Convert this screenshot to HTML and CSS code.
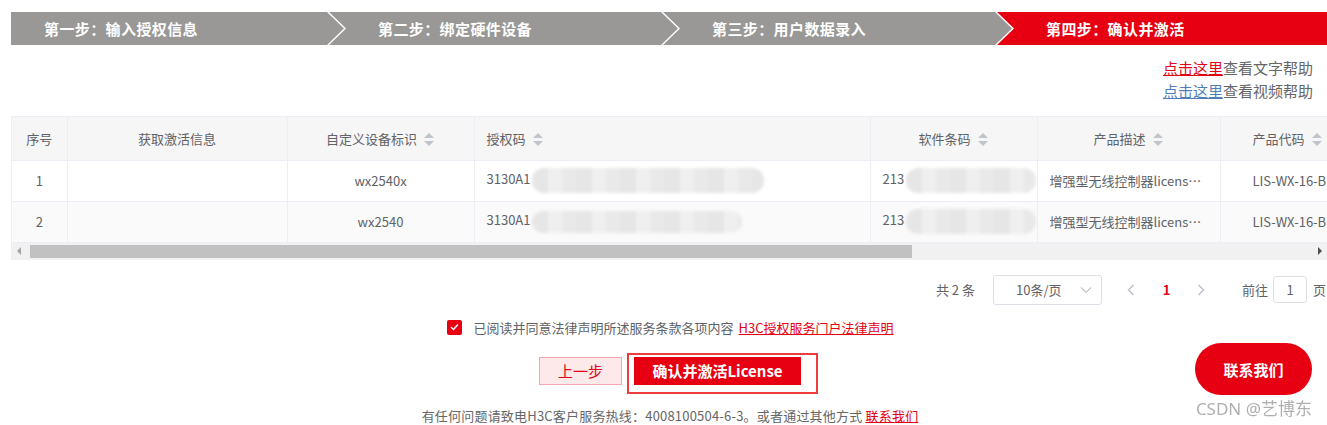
FILE: index.html
```html
<!DOCTYPE html>
<html lang="zh-CN">
    <head>
        <meta charset="UTF-8" />
        <meta name="viewport" content="width=device-width, initial-scale=1.0" />
        <title>确认并激活</title>
        <link rel="stylesheet" href="styles.css">
    </head>
    <body>
        <div class="page">
            <ol class="steps">
                <li class="step">第一步：输入授权信息</li>
                <li class="step">第二步：绑定硬件设备</li>
                <li class="step">第三步：用户数据录入</li>
                <li class="step active">第四步：确认并激活</li>
            </ol>

            <div class="help">
                <p><a href="#" class="link-red">点击这里</a>查看文字帮助</p>
                <p><a href="#" class="link-blue">点击这里</a>查看视频帮助</p>
            </div>

            <div class="table-wrap">
                <table class="grid">
                    <colgroup>
                        <col style="width: 55px">
                        <col style="width: 220px">
                        <col style="width: 187px">
                        <col style="width: 396px">
                        <col style="width: 167px">
                        <col style="width: 183px">
                        <col style="width: 160px">
                    </colgroup>
                    <thead>
                        <tr>
                            <th class="center">序号</th>
                            <th class="center">获取激活信息</th>
                            <th class="center">自定义设备标识<span class="sort"></span></th>
                            <th>授权码<span class="sort"></span></th>
                            <th class="center">软件条码<span class="sort"></span></th>
                            <th class="center">产品描述<span class="sort"></span></th>
                            <th class="code-head">产品代码<span class="sort"></span></th>
                        </tr>
                    </thead>
                    <tbody>
                        <tr>
                            <td class="center">1</td>
                            <td></td>
                            <td class="center">wx2540x</td>
                            <td class="clip">3130A1<span class="mask mask-long"></span></td>
                            <td class="clip">213<span class="mask mask-short"></span></td>
                            <td class="center">增强型无线控制器license授权函</td>
                            <td class="code">LIS-WX-16-BE</td>
                        </tr>
                        <tr class="stripe">
                            <td class="center">2</td>
                            <td></td>
                            <td class="center">wx2540</td>
                            <td class="clip">3130A1<span class="mask mask-mid"></span></td>
                            <td class="clip">213<span class="mask mask-short"></span></td>
                            <td class="center">增强型无线控制器license授权函</td>
                            <td class="code">LIS-WX-16-BE</td>
                        </tr>
                    </tbody>
                </table>
                <div class="hscroll">
                    <span class="arrow-left"></span>
                    <span class="thumb"></span>
                    <span class="arrow-right"></span>
                </div>
            </div>

            <div class="pager">
                <span class="total">共 2 条</span>
                <div class="size-select">
                    <span>10条/页</span>
                    <svg width="12" height="8" viewBox="0 0 12 8"><path d="M1 1.5 6 6.5 11 1.5" fill="none" stroke="#c0c4cc" stroke-width="1.2"/></svg>
                </div>
                <button class="page-btn">
                    <svg width="8" height="12" viewBox="0 0 8 12"><path d="M6.5 1 1.5 6 6.5 11" fill="none" stroke="#c0c4cc" stroke-width="1.6"/></svg>
                </button>
                <button class="page-btn current">1</button>
                <button class="page-btn">
                    <svg width="8" height="12" viewBox="0 0 8 12"><path d="M1.5 1 6.5 6 1.5 11" fill="none" stroke="#c0c4cc" stroke-width="1.6"/></svg>
                </button>
                <span class="jump">前往<span class="jump-input">1</span>页</span>
            </div>

            <div class="agree">
                <span class="checkbox">
                    <svg width="9" height="8" viewBox="0 0 9 8"><path d="M1 4 3.5 6.5 8 1.5" fill="none" stroke="#fff" stroke-width="1.4"/></svg>
                </span>
                已阅读并同意法律声明所述服务条款各项内容
                <a href="#" class="link-red">H3C授权服务门户法律声明</a>
            </div>

            <div class="actions">
                <button class="btn-prev">上一步</button>
                <div class="confirm-box">
                    <button class="btn-confirm">确认并激活License</button>
                </div>
            </div>

            <p class="hotline">
                有任何问题请致电H3C客户服务热线：4008100504-6-3。或者通过其他方式
                <a href="#" class="link-red">联系我们</a>
            </p>
        </div>
        <div class="bottom-rule"></div>

        <a href="#" class="contact-float">联系我们</a>
        <div class="watermark">CSDN @艺博东</div>
    </body>
</html>
```

FILE: styles.css
```css
* {
    margin: 0;
    padding: 0;
    box-sizing: border-box;
}

body {
    font-family: "Noto Sans CJK SC", "Noto Sans", sans-serif;
    background-color: #fff;
    color: #606266;
    height: 425px;
    overflow: hidden;
}

a {
    text-decoration: underline;
}

.link-red {
    color: #e60012;
}

.link-blue {
    color: #4f7fb6;
}

.page {
    width: 1318px;
    margin-left: 11px;
    padding-top: 12px;
}

/* step bar */
.steps {
    list-style: none;
    display: flex;
    height: 33px;
}

.step {
    flex: none;
    width: 349px;
    height: 33px;
    margin-left: -15px;
    padding-left: 49px;
    line-height: 33px;
    background-color: #999896;
    color: #fff;
    font-size: 15px;
    font-weight: bold;
    letter-spacing: 0.4px;
    clip-path: polygon(0 0, calc(100% - 17px) 0, 100% 50%, calc(100% - 17px) 100%, 0 100%, 17px 50%);
}

.step:first-child {
    width: 333px;
    margin-left: 0;
    padding-left: 33px;
    clip-path: polygon(0 0, calc(100% - 17px) 0, 100% 50%, calc(100% - 17px) 100%, 0 100%);
}

.step.active {
    flex: 1;
    background-color: #e60012;
    clip-path: polygon(0 0, 100% 0, 100% 100%, 0 100%, 17px 50%);
}

/* help links */
.help {
    margin-top: 11px;
    padding-right: 16px;
    text-align: right;
    font-size: 15px;
    line-height: 23px;
    color: #666;
}

/* table */
.table-wrap {
    margin-top: 14px;
    width: 1316px;
    overflow: hidden;
    border-left: 1px solid #ebeef5;
    border-top: 1px solid #ebeef5;
}

.grid {
    table-layout: fixed;
    border-collapse: collapse;
    width: 1368px;
    font-size: 13px;
    color: #606266;
}

.grid th,
.grid td {
    padding: 0 12px;
    border-right: 1px solid #ebeef5;
    border-bottom: 1px solid #ebeef5;
    white-space: nowrap;
    overflow: hidden;
    text-overflow: ellipsis;
    text-align: left;
    font-weight: normal;
}

.grid th {
    height: 43px;
    background-color: #f6f6f7;
}

.grid td {
    height: 41px;
}

.grid .center {
    text-align: center;
}

.grid .clip {
    padding-right: 0;
    text-overflow: clip;
}

.grid .code,
.grid .code-head {
    padding-left: 32px;
    text-overflow: clip;
}

.grid tr.stripe td {
    background-color: #fafafa;
}

.sort {
    display: inline-block;
    position: relative;
    width: 12px;
    height: 13px;
    margin-left: 6px;
    vertical-align: -2px;
}

.sort::before,
.sort::after {
    content: "";
    position: absolute;
    left: 1px;
    border-left: 5px solid transparent;
    border-right: 5px solid transparent;
}

.sort::before {
    top: 0;
    border-bottom: 5px solid #c0c4cc;
}

.sort::after {
    bottom: 0;
    border-top: 5px solid #c0c4cc;
}

/* blurred values */
.mask {
    display: inline-block;
    vertical-align: middle;
    height: 25px;
    margin-left: 2px;
    border-radius: 12px;
    background: repeating-linear-gradient(90deg, #e6e6e6 0 16px, #efefef 16px 30px, #e9e9e9 30px 44px);
    filter: blur(1.5px);
}

.mask-long {
    width: 232px;
}

.mask-mid {
    width: 210px;
    height: 22px;
}

.mask-short {
    width: 130px;
}

/* horizontal scrollbar */
.hscroll {
    display: flex;
    align-items: center;
    height: 17px;
    background-color: #f1f1f1;
}

.arrow-left {
    width: 0;
    height: 0;
    margin: 0 9px 0 5px;
    border-top: 4px solid transparent;
    border-bottom: 4px solid transparent;
    border-right: 4px solid #a3a3a3;
}

.thumb {
    width: 882px;
    height: 13px;
    background-color: #c1c1c1;
}

.arrow-right {
    width: 0;
    height: 0;
    margin-left: auto;
    margin-right: 5px;
    border-top: 4px solid transparent;
    border-bottom: 4px solid transparent;
    border-left: 4px solid #505050;
}

/* pagination */
.pager {
    display: flex;
    justify-content: flex-end;
    align-items: center;
    height: 30px;
    margin-top: 15px;
    padding-right: 3px;
    font-size: 13px;
    color: #606266;
}

.total {
    margin-right: 18px;
}

.size-select {
    display: flex;
    align-items: center;
    justify-content: space-between;
    width: 109px;
    height: 30px;
    padding: 0 9px 0 22px;
    border: 1px solid #dcdfe6;
    border-radius: 3px;
}

.page-btn {
    display: flex;
    justify-content: center;
    align-items: center;
    width: 35px;
    height: 28px;
    border: none;
    background: none;
    font-family: inherit;
    font-size: 13px;
    color: #606266;
}

.size-select + .page-btn {
    margin-left: 12px;
}

.page-btn.current {
    color: #e60012;
    font-weight: bold;
}

.jump {
    display: flex;
    align-items: center;
    margin-left: 23px;
}

.jump-input {
    width: 34px;
    height: 27px;
    margin: 0 6px 0 5px;
    border: 1px solid #dcdfe6;
    border-radius: 3px;
    line-height: 25px;
    text-align: center;
}

/* agreement */
.agree {
    display: flex;
    justify-content: center;
    align-items: center;
    height: 15px;
    margin-top: 15px;
    font-size: 13px;
    color: #606266;
}

.checkbox {
    display: flex;
    justify-content: center;
    align-items: center;
    width: 15px;
    height: 15px;
    margin-right: 12px;
    border-radius: 2px;
    background-color: #e60012;
}

.agree .link-red {
    margin-left: 5px;
}

/* buttons */
.actions {
    display: flex;
    justify-content: center;
    gap: 12px;
    margin-top: 22px;
}

.actions button {
    height: 28px;
    font-family: inherit;
    font-size: 15px;
    cursor: pointer;
}

.btn-prev {
    width: 83px;
    background-color: #fde8ea;
    border: 1px solid #f4a5ad;
    color: #e60012;
}

.confirm-box {
    position: relative;
}

/* highlight frame drawn round the confirm button */
.confirm-box::after {
    content: "";
    position: absolute;
    top: -4px;
    left: -7px;
    right: -17px;
    bottom: -9px;
    border: 2px solid #ef3b3b;
}

.btn-confirm {
    width: 167px;
    border: none;
    background-color: #e60012;
    color: #fff;
    font-weight: bold;
}

.hotline {
    margin-top: 22px;
    font-size: 13px;
    line-height: 18px;
    letter-spacing: 0.2px;
    text-align: center;
    color: #666;
}

.bottom-rule {
    height: 3px;
    background-color: #eee;
}

/* floating contact button */
.contact-float {
    position: fixed;
    top: 343px;
    right: 15px;
    display: flex;
    justify-content: center;
    align-items: center;
    width: 117px;
    height: 52px;
    border-radius: 26px;
    background-color: #e60012;
    color: #fff;
    font-size: 15px;
    font-weight: bold;
    text-decoration: none;
}

.watermark {
    position: fixed;
    top: 395px;
    right: 15px;
    font-family: "Noto Sans", "Noto Sans CJK SC", sans-serif;
    font-size: 17px;
    color: rgba(110, 110, 110, 0.55);
}
```
